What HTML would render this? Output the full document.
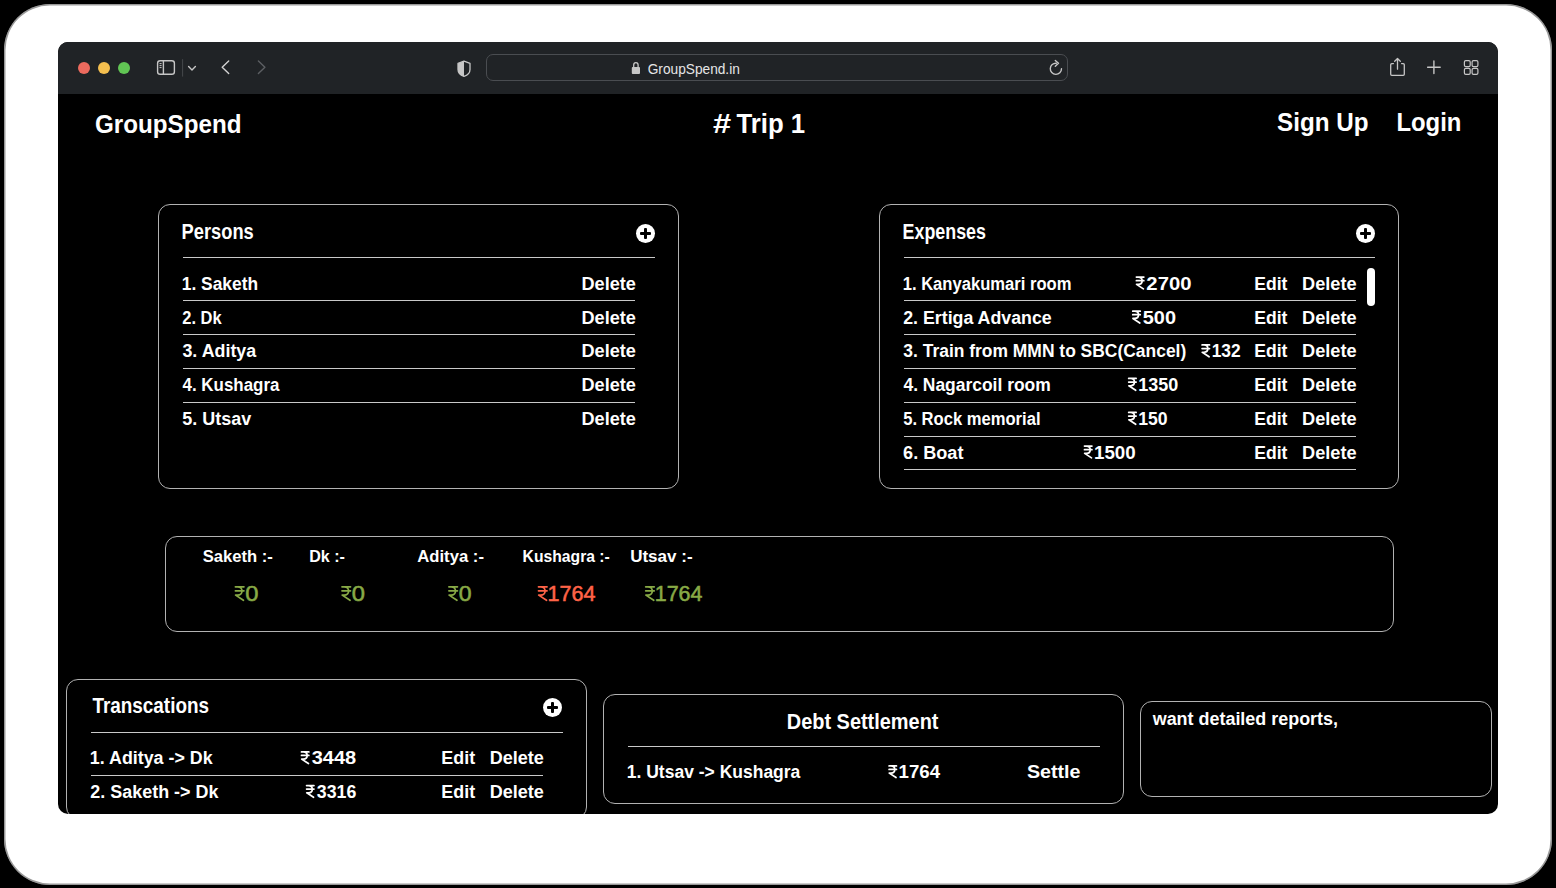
<!DOCTYPE html>
<html><head><meta charset="utf-8"><title>GroupSpend</title>
<style>
*{box-sizing:border-box;margin:0;padding:0}
html,body{width:1556px;height:888px;overflow:hidden;background:#000;font-family:"Liberation Sans",sans-serif}
.abs{position:absolute}
#frame{position:absolute;left:4px;top:4px;width:1548px;height:880.5px;background:#fff;border-radius:46px;box-shadow:inset 0 0 0 1.5px rgba(0,0,0,.4)}
#win{position:absolute;left:58px;top:42px;width:1440px;height:772px;background:#000;border-radius:10px;overflow:hidden}
#bar{position:absolute;left:0;top:0;width:1440px;height:52px;background:#202326}
.dot{position:absolute;width:12.5px;height:12.5px;border-radius:50%;top:19.8px}
.panel{position:absolute;border:1px solid #b2b2b2;border-radius:12px}
.hl{position:absolute;height:1px;background:#c9c9c9}
.plus{position:absolute;width:19px;height:19px;border-radius:50%;background:#fff}
.plus:before,.plus:after{content:"";position:absolute;background:#000;border-radius:1px}
.plus:before{left:4px;top:8px;width:11px;height:3px}
.plus:after{left:8px;top:4px;width:3px;height:11px}
#ov{position:absolute;left:0;top:0}
</style></head>
<body>
<div id="frame"></div>
<div id="win">
  <div id="bar">
    <div class="dot" style="left:19.8px;background:#ec6a5e"></div>
    <div class="dot" style="left:39.8px;background:#f4bf4f"></div>
    <div class="dot" style="left:59.8px;background:#61c554"></div>
    <div class="abs" style="left:428.2px;top:12.4px;width:581.5px;height:27px;border:1.3px solid #4a4d51;border-radius:7px"></div>
  </div>
<div id="content" style="position:absolute;left:-58px;top:-42px;width:1556px;height:888px">
<!-- panels in page coords -->
<div class="panel" style="left:158px;top:204px;width:520.5px;height:285px"></div>
<div class="panel" style="left:879px;top:204px;width:520px;height:285px"></div>
<div class="panel" style="left:165px;top:536px;width:1228.5px;height:96px"></div>
<div class="panel" style="left:66px;top:679px;width:521px;height:140px"></div>
<div class="panel" style="left:603px;top:694px;width:521px;height:110px"></div>
<div class="panel" style="left:1140px;top:700.5px;width:352px;height:96px"></div>

<div class="hl" style="left:182.5px;top:257px;width:472px"></div>
<div class="hl" style="left:182.5px;top:300px;width:452.5px"></div>
<div class="hl" style="left:182.5px;top:334px;width:452.5px"></div>
<div class="hl" style="left:182.5px;top:368px;width:452.5px"></div>
<div class="hl" style="left:182.5px;top:402px;width:452.5px"></div>

<div class="hl" style="left:903.5px;top:257px;width:471.5px"></div>
<div class="hl" style="left:903.5px;top:300px;width:452.5px"></div>
<div class="hl" style="left:903.5px;top:334px;width:452.5px"></div>
<div class="hl" style="left:903.5px;top:368px;width:452.5px"></div>
<div class="hl" style="left:903.5px;top:402px;width:452.5px"></div>
<div class="hl" style="left:903.5px;top:435.5px;width:452.5px"></div>
<div class="hl" style="left:903.5px;top:469px;width:452.5px"></div>

<div class="hl" style="left:90.5px;top:731.5px;width:472px"></div>
<div class="hl" style="left:90.5px;top:775px;width:452.5px"></div>
<div class="hl" style="left:627.5px;top:746px;width:472px"></div>

<div class="plus" style="left:635.5px;top:223.8px"></div>
<div class="plus" style="left:1356.2px;top:223.8px"></div>
<div class="plus" style="left:543.2px;top:698.2px"></div>
<div class="abs" style="left:1367.4px;top:267.7px;width:7.6px;height:38px;border-radius:4px;background:#fff"></div>

<svg id="ov" width="1556" height="888" viewBox="0 0 1556 888" font-family="Liberation Sans">
<g fill="none" stroke="#c6c6c6" stroke-width="1.4" stroke-linecap="round" stroke-linejoin="round">
<rect x="157.6" y="60.7" width="16.8" height="13.6" rx="2.6"/>
<path d="M163.4 60.7V74.3"/>
<path d="M159.9 63.6H161.2M159.9 65.6H161.2M159.9 67.6H161.2" stroke-width="1"/>
<path d="M188.6 66.6L192 69.9L195.4 66.6"/>
<path d="M228.7 61L222.2 67.3L228.7 73.6" stroke="#d2d2d2" stroke-width="1.4"/>
<path d="M258.4 61L264.9 67.3L258.4 73.6" stroke="#5c5f63" stroke-width="1.4"/>
<path d="M464 61.2L458 63.4V69.4C458 72.8 460.8 75.2 464 76.4C467.2 75.2 470 72.8 470 69.4V63.4Z" stroke-width="1.3"/>
<path d="M464 61.2L458 63.4V69.4C458 72.8 460.8 75.2 464 76.4Z" fill="#c6c6c6" stroke="none"/>
<path d="M633.7 67V65C633.7 61.8 638.1 61.8 638.1 65V67" stroke-width="1.3"/>
<rect x="631.8" y="67" width="8.2" height="6.9" rx="0.9" fill="#c6c6c6" stroke="none"/>
<path d="M1061.5 68.8A5.6 5.6 0 1 1 1056.3 63.2"/>
<path d="M1055.3 60.4L1058.5 63.3L1055.3 66.3"/>
<path d="M1393.4 63.6H1391.8Q1390.7 63.6 1390.7 64.7V74.2Q1390.7 75.3 1391.8 75.3H1403.2Q1404.3 75.3 1404.3 74.2V64.7Q1404.3 63.6 1403.2 63.6H1401.6" stroke-width="1.3"/>
<path d="M1397.5 58.6V69.2M1394.7 61.3L1397.5 58.5L1400.3 61.3" stroke-width="1.3"/>
<path d="M1427.6 67.3H1440.2M1433.9 61V73.6" stroke-width="1.4"/>
<rect x="1464.4" y="60.7" width="5.8" height="5.9" rx="1.4" stroke-width="1.2"/>
<rect x="1472.1" y="60.7" width="5.8" height="5.9" rx="1.4" stroke-width="1.2"/>
<rect x="1464.4" y="68.4" width="5.8" height="5.9" rx="1.4" stroke-width="1.2"/>
<rect x="1472.1" y="68.4" width="5.8" height="5.9" rx="1.4" stroke-width="1.2"/>
</g>
<path d="M182.6 59.2V76.6" stroke="#45484c" stroke-width="1"/>
<text x="95.03" y="132.80" font-size="25.90" font-weight="bold" fill="#fff" textLength="146.56" lengthAdjust="spacingAndGlyphs">GroupSpend</text>
<text x="713.11" y="133.00" font-size="27.48" font-weight="bold" fill="#fff" textLength="18.15" lengthAdjust="spacingAndGlyphs">#</text>
<text x="736.44" y="133.00" font-size="27.48" font-weight="bold" fill="#fff" textLength="68.63" lengthAdjust="spacingAndGlyphs">Trip 1</text>
<text x="1277.10" y="131.40" font-size="26.47" font-weight="bold" fill="#fff" textLength="91.39" lengthAdjust="spacingAndGlyphs">Sign Up</text>
<text x="1396.45" y="131.40" font-size="26.47" font-weight="bold" fill="#fff" textLength="65.01" lengthAdjust="spacingAndGlyphs">Login</text>
<text x="647.72" y="73.80" font-size="15.51" font-weight="normal" fill="#e6e6e6" textLength="92.12" lengthAdjust="spacingAndGlyphs">GroupSpend.in</text>
<text x="181.61" y="239.00" font-size="21.73" font-weight="bold" fill="#fff" textLength="72.15" lengthAdjust="spacingAndGlyphs">Persons</text>
<text x="181.76" y="289.50" font-size="19.14" font-weight="bold" fill="#fff" textLength="76.30" lengthAdjust="spacingAndGlyphs">1. Saketh</text>
<text x="581.52" y="289.50" font-size="19.14" font-weight="bold" fill="#fff" textLength="54.44" lengthAdjust="spacingAndGlyphs">Delete</text>
<text x="182.31" y="323.60" font-size="19.14" font-weight="bold" fill="#fff" textLength="39.33" lengthAdjust="spacingAndGlyphs">2. Dk</text>
<text x="581.52" y="323.60" font-size="19.14" font-weight="bold" fill="#fff" textLength="54.44" lengthAdjust="spacingAndGlyphs">Delete</text>
<text x="182.45" y="357.40" font-size="19.14" font-weight="bold" fill="#fff" textLength="73.80" lengthAdjust="spacingAndGlyphs">3. Aditya</text>
<text x="581.52" y="357.40" font-size="19.14" font-weight="bold" fill="#fff" textLength="54.44" lengthAdjust="spacingAndGlyphs">Delete</text>
<text x="182.55" y="390.90" font-size="19.14" font-weight="bold" fill="#fff" textLength="96.90" lengthAdjust="spacingAndGlyphs">4. Kushagra</text>
<text x="581.52" y="390.90" font-size="19.14" font-weight="bold" fill="#fff" textLength="54.44" lengthAdjust="spacingAndGlyphs">Delete</text>
<text x="182.26" y="424.90" font-size="19.14" font-weight="bold" fill="#fff" textLength="68.96" lengthAdjust="spacingAndGlyphs">5. Utsav</text>
<text x="581.52" y="424.90" font-size="19.14" font-weight="bold" fill="#fff" textLength="54.44" lengthAdjust="spacingAndGlyphs">Delete</text>
<text x="902.54" y="239.00" font-size="21.73" font-weight="bold" fill="#fff" textLength="83.41" lengthAdjust="spacingAndGlyphs">Expenses</text>
<text x="902.70" y="289.50" font-size="19.14" font-weight="bold" fill="#fff" textLength="168.78" lengthAdjust="spacingAndGlyphs">1. Kanyakumari room</text>
<text x="1146.39" y="289.50" font-size="19.14" font-weight="bold" fill="#fff" textLength="45.04" lengthAdjust="spacingAndGlyphs">2700</text>
<text x="1254.26" y="289.50" font-size="19.14" font-weight="bold" fill="#fff" textLength="33.18" lengthAdjust="spacingAndGlyphs">Edit</text>
<text x="1302.02" y="289.50" font-size="19.14" font-weight="bold" fill="#fff" textLength="54.55" lengthAdjust="spacingAndGlyphs">Delete</text>
<text x="903.17" y="323.60" font-size="19.14" font-weight="bold" fill="#fff" textLength="148.58" lengthAdjust="spacingAndGlyphs">2. Ertiga Advance</text>
<text x="1142.80" y="323.60" font-size="19.14" font-weight="bold" fill="#fff" textLength="33.22" lengthAdjust="spacingAndGlyphs">500</text>
<text x="1254.26" y="323.60" font-size="19.14" font-weight="bold" fill="#fff" textLength="33.18" lengthAdjust="spacingAndGlyphs">Edit</text>
<text x="1302.02" y="323.60" font-size="19.14" font-weight="bold" fill="#fff" textLength="54.55" lengthAdjust="spacingAndGlyphs">Delete</text>
<text x="903.35" y="357.40" font-size="19.14" font-weight="bold" fill="#fff" textLength="282.89" lengthAdjust="spacingAndGlyphs">3. Train from MMN to SBC(Cancel)</text>
<text x="1211.66" y="357.40" font-size="19.14" font-weight="bold" fill="#fff" textLength="28.97" lengthAdjust="spacingAndGlyphs">132</text>
<text x="1254.26" y="357.40" font-size="19.14" font-weight="bold" fill="#fff" textLength="33.18" lengthAdjust="spacingAndGlyphs">Edit</text>
<text x="1302.02" y="357.40" font-size="19.14" font-weight="bold" fill="#fff" textLength="54.55" lengthAdjust="spacingAndGlyphs">Delete</text>
<text x="903.44" y="390.90" font-size="19.14" font-weight="bold" fill="#fff" textLength="147.29" lengthAdjust="spacingAndGlyphs">4. Nagarcoil room</text>
<text x="1138.22" y="390.90" font-size="19.14" font-weight="bold" fill="#fff" textLength="40.03" lengthAdjust="spacingAndGlyphs">1350</text>
<text x="1254.26" y="390.90" font-size="19.14" font-weight="bold" fill="#fff" textLength="33.18" lengthAdjust="spacingAndGlyphs">Edit</text>
<text x="1302.02" y="390.90" font-size="19.14" font-weight="bold" fill="#fff" textLength="54.55" lengthAdjust="spacingAndGlyphs">Delete</text>
<text x="903.20" y="424.90" font-size="19.14" font-weight="bold" fill="#fff" textLength="137.32" lengthAdjust="spacingAndGlyphs">5. Rock memorial</text>
<text x="1138.24" y="424.90" font-size="19.14" font-weight="bold" fill="#fff" textLength="29.39" lengthAdjust="spacingAndGlyphs">150</text>
<text x="1254.26" y="424.90" font-size="19.14" font-weight="bold" fill="#fff" textLength="33.18" lengthAdjust="spacingAndGlyphs">Edit</text>
<text x="1302.02" y="424.90" font-size="19.14" font-weight="bold" fill="#fff" textLength="54.55" lengthAdjust="spacingAndGlyphs">Delete</text>
<text x="903.07" y="458.50" font-size="19.14" font-weight="bold" fill="#fff" textLength="60.38" lengthAdjust="spacingAndGlyphs">6. Boat</text>
<text x="1093.98" y="458.50" font-size="19.14" font-weight="bold" fill="#fff" textLength="41.70" lengthAdjust="spacingAndGlyphs">1500</text>
<text x="1254.26" y="458.50" font-size="19.14" font-weight="bold" fill="#fff" textLength="33.18" lengthAdjust="spacingAndGlyphs">Edit</text>
<text x="1302.02" y="458.50" font-size="19.14" font-weight="bold" fill="#fff" textLength="54.55" lengthAdjust="spacingAndGlyphs">Delete</text>
<text x="202.79" y="561.60" font-size="16.69" font-weight="bold" fill="#fff" textLength="70.05" lengthAdjust="spacingAndGlyphs">Saketh :-</text>
<text x="309.15" y="561.60" font-size="16.69" font-weight="bold" fill="#fff" textLength="35.76" lengthAdjust="spacingAndGlyphs">Dk :-</text>
<text x="417.27" y="561.60" font-size="16.69" font-weight="bold" fill="#fff" textLength="66.67" lengthAdjust="spacingAndGlyphs">Aditya :-</text>
<text x="522.58" y="561.60" font-size="16.69" font-weight="bold" fill="#fff" textLength="87.22" lengthAdjust="spacingAndGlyphs">Kushagra :-</text>
<text x="630.18" y="561.60" font-size="16.69" font-weight="bold" fill="#fff" textLength="62.37" lengthAdjust="spacingAndGlyphs">Utsav :-</text>
<text x="245.27" y="601.00" font-size="22.03" font-weight="normal" fill="#88aa46" stroke="#88aa46" stroke-width="0.55" textLength="13.19" lengthAdjust="spacingAndGlyphs">0</text>
<text x="351.87" y="601.00" font-size="22.03" font-weight="normal" fill="#88aa46" stroke="#88aa46" stroke-width="0.55" textLength="13.19" lengthAdjust="spacingAndGlyphs">0</text>
<text x="458.79" y="601.00" font-size="22.03" font-weight="normal" fill="#88aa46" stroke="#88aa46" stroke-width="0.55" textLength="12.84" lengthAdjust="spacingAndGlyphs">0</text>
<text x="547.59" y="601.00" font-size="22.03" font-weight="normal" fill="#ff6347" stroke="#ff6347" stroke-width="0.55" textLength="47.88" lengthAdjust="spacingAndGlyphs">1764</text>
<text x="654.79" y="601.00" font-size="22.03" font-weight="normal" fill="#88aa46" stroke="#88aa46" stroke-width="0.55" textLength="47.67" lengthAdjust="spacingAndGlyphs">1764</text>
<text x="92.41" y="713.40" font-size="21.44" font-weight="bold" fill="#fff" textLength="116.57" lengthAdjust="spacingAndGlyphs">Transcations</text>
<text x="89.84" y="764.20" font-size="18.99" font-weight="bold" fill="#fff" textLength="122.80" lengthAdjust="spacingAndGlyphs">1. Aditya -&gt; Dk</text>
<text x="90.36" y="797.90" font-size="18.99" font-weight="bold" fill="#fff" textLength="128.07" lengthAdjust="spacingAndGlyphs">2. Saketh -&gt; Dk</text>
<text x="311.70" y="764.20" font-size="18.99" font-weight="bold" fill="#fff" textLength="44.52" lengthAdjust="spacingAndGlyphs">3448</text>
<text x="316.84" y="797.90" font-size="18.99" font-weight="bold" fill="#fff" textLength="39.50" lengthAdjust="spacingAndGlyphs">3316</text>
<text x="441.34" y="764.20" font-size="18.99" font-weight="bold" fill="#fff" textLength="33.81" lengthAdjust="spacingAndGlyphs">Edit</text>
<text x="489.63" y="764.20" font-size="18.99" font-weight="bold" fill="#fff" textLength="54.13" lengthAdjust="spacingAndGlyphs">Delete</text>
<text x="441.34" y="797.90" font-size="18.99" font-weight="bold" fill="#fff" textLength="33.81" lengthAdjust="spacingAndGlyphs">Edit</text>
<text x="489.63" y="797.90" font-size="18.99" font-weight="bold" fill="#fff" textLength="54.13" lengthAdjust="spacingAndGlyphs">Delete</text>
<text x="786.81" y="728.70" font-size="21.44" font-weight="bold" fill="#fff" textLength="151.65" lengthAdjust="spacingAndGlyphs">Debt Settlement</text>
<text x="626.75" y="778.20" font-size="18.99" font-weight="bold" fill="#fff" textLength="173.60" lengthAdjust="spacingAndGlyphs">1. Utsav -&gt; Kushagra</text>
<text x="898.58" y="778.20" font-size="18.99" font-weight="bold" fill="#fff" textLength="41.44" lengthAdjust="spacingAndGlyphs">1764</text>
<text x="1026.91" y="778.20" font-size="18.99" font-weight="bold" fill="#fff" textLength="53.61" lengthAdjust="spacingAndGlyphs">Settle</text>
<text x="1152.69" y="724.50" font-size="18.62" font-weight="bold" fill="#fff" textLength="185.34" lengthAdjust="spacingAndGlyphs">want detailed reports,</text>
<g transform="translate(1135.50,276.20) scale(0.8778,0.8867)" fill="none" stroke="#fff" stroke-width="1.95" stroke-linecap="round" stroke-linejoin="round"><path d="M1 1H9.5M1 5H9.5M3.2 1C9 1 9 9.2 3.2 9.2H1.2L9 14.3"/></g>
<g transform="translate(1131.90,310.30) scale(0.8778,0.8867)" fill="none" stroke="#fff" stroke-width="1.95" stroke-linecap="round" stroke-linejoin="round"><path d="M1 1H9.5M1 5H9.5M3.2 1C9 1 9 9.2 3.2 9.2H1.2L9 14.3"/></g>
<g transform="translate(1201.20,344.10) scale(0.8778,0.8867)" fill="none" stroke="#fff" stroke-width="1.95" stroke-linecap="round" stroke-linejoin="round"><path d="M1 1H9.5M1 5H9.5M3.2 1C9 1 9 9.2 3.2 9.2H1.2L9 14.3"/></g>
<g transform="translate(1127.80,377.60) scale(0.8778,0.8867)" fill="none" stroke="#fff" stroke-width="1.95" stroke-linecap="round" stroke-linejoin="round"><path d="M1 1H9.5M1 5H9.5M3.2 1C9 1 9 9.2 3.2 9.2H1.2L9 14.3"/></g>
<g transform="translate(1127.80,411.60) scale(0.8778,0.8867)" fill="none" stroke="#fff" stroke-width="1.95" stroke-linecap="round" stroke-linejoin="round"><path d="M1 1H9.5M1 5H9.5M3.2 1C9 1 9 9.2 3.2 9.2H1.2L9 14.3"/></g>
<g transform="translate(1083.60,445.20) scale(0.8778,0.8867)" fill="none" stroke="#fff" stroke-width="1.95" stroke-linecap="round" stroke-linejoin="round"><path d="M1 1H9.5M1 5H9.5M3.2 1C9 1 9 9.2 3.2 9.2H1.2L9 14.3"/></g>
<g transform="translate(234.40,585.80) scale(1.0032,1.0133)" fill="none" stroke="#88aa46" stroke-width="1.73" stroke-linecap="round" stroke-linejoin="round"><path d="M1 1H9.5M1 5H9.5M3.2 1C9 1 9 9.2 3.2 9.2H1.2L9 14.3"/></g>
<g transform="translate(341.00,585.80) scale(1.0032,1.0133)" fill="none" stroke="#88aa46" stroke-width="1.73" stroke-linecap="round" stroke-linejoin="round"><path d="M1 1H9.5M1 5H9.5M3.2 1C9 1 9 9.2 3.2 9.2H1.2L9 14.3"/></g>
<g transform="translate(447.90,585.80) scale(1.0032,1.0133)" fill="none" stroke="#88aa46" stroke-width="1.73" stroke-linecap="round" stroke-linejoin="round"><path d="M1 1H9.5M1 5H9.5M3.2 1C9 1 9 9.2 3.2 9.2H1.2L9 14.3"/></g>
<g transform="translate(537.50,585.80) scale(1.0032,1.0133)" fill="none" stroke="#ff6347" stroke-width="1.73" stroke-linecap="round" stroke-linejoin="round"><path d="M1 1H9.5M1 5H9.5M3.2 1C9 1 9 9.2 3.2 9.2H1.2L9 14.3"/></g>
<g transform="translate(644.70,585.80) scale(1.0032,1.0133)" fill="none" stroke="#88aa46" stroke-width="1.73" stroke-linecap="round" stroke-linejoin="round"><path d="M1 1H9.5M1 5H9.5M3.2 1C9 1 9 9.2 3.2 9.2H1.2L9 14.3"/></g>
<g transform="translate(300.60,751.00) scale(0.8712,0.8800)" fill="none" stroke="#fff" stroke-width="1.95" stroke-linecap="round" stroke-linejoin="round"><path d="M1 1H9.5M1 5H9.5M3.2 1C9 1 9 9.2 3.2 9.2H1.2L9 14.3"/></g>
<g transform="translate(305.70,784.70) scale(0.8712,0.8800)" fill="none" stroke="#fff" stroke-width="1.95" stroke-linecap="round" stroke-linejoin="round"><path d="M1 1H9.5M1 5H9.5M3.2 1C9 1 9 9.2 3.2 9.2H1.2L9 14.3"/></g>
<g transform="translate(888.20,765.00) scale(0.8712,0.8800)" fill="none" stroke="#fff" stroke-width="1.95" stroke-linecap="round" stroke-linejoin="round"><path d="M1 1H9.5M1 5H9.5M3.2 1C9 1 9 9.2 3.2 9.2H1.2L9 14.3"/></g>
</svg>
</div>
</div>
</body></html>
